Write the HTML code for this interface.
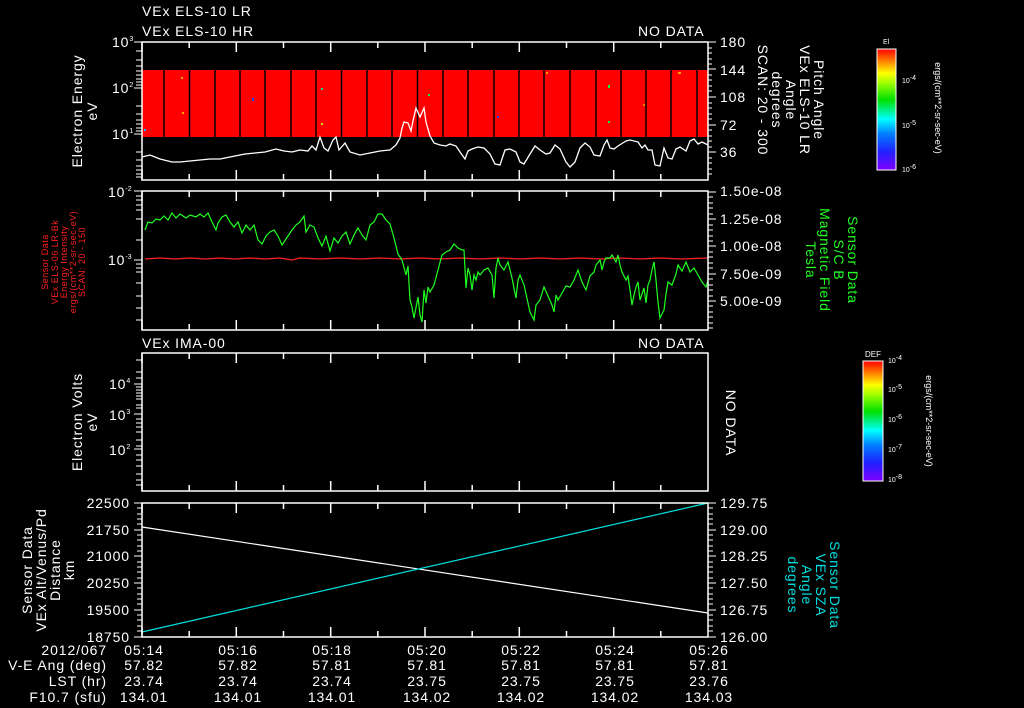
<!DOCTYPE html>
<html><head><meta charset="utf-8"><style>
html,body{margin:0;padding:0;background:#000;width:1024px;height:708px;overflow:hidden}
svg{display:block}
text{font-family:"Liberation Sans",sans-serif;fill:#fff;font-size:14px;letter-spacing:0.9px}
.s{font-size:12px}
.xs{font-size:7px;letter-spacing:0}
</style></head><body>
<svg width="1024" height="708" viewBox="0 0 1024 708">
<defs>
<linearGradient id="cb" x1="0" y1="1" x2="0" y2="0">
<stop offset="0" stop-color="#8000ff"/><stop offset="0.15" stop-color="#2020ff"/><stop offset="0.3" stop-color="#0080ff"/><stop offset="0.42" stop-color="#00ffff"/><stop offset="0.58" stop-color="#00e000"/><stop offset="0.72" stop-color="#a0ff00"/><stop offset="0.8" stop-color="#ffff00"/><stop offset="0.9" stop-color="#ff8000"/><stop offset="1" stop-color="#ff0000"/>
</linearGradient>
<g id="xt" stroke="#fff" stroke-width="1.5">
<path d="M142 0v10M236.3 0v10M330.7 0v10M425 0v10M519.3 0v10M613.7 0v10M189.2 0v6M283.5 0v6M377.8 0v6M472.2 0v6M566.5 0v6M660.8 0v6"/>
</g>
</defs>

<!-- Panel 1 -->
<text x="142" y="16">VEx ELS-10 LR</text>
<text x="142" y="36">VEx ELS-10 HR</text>
<text x="638" y="36">NO DATA</text>
<rect x="142" y="70" width="566" height="67" fill="#ff0000"/>
<g stroke="#000" stroke-width="1.5">
<path d="M164 70v67M189.5 70v67M215 70v67M240 70v67M265 70v67M291 70v67M316 70v67M341.5 70v67M367 70v67M392 70v67M417.5 70v67M443 70v67M468 70v67M494 70v67M519 70v67M544 70v67M570 70v67M596 70v67M621 70v67M646 70v67M671 70v67M697 70v67"/>
</g>
<g>
<rect x="181" y="77" width="2" height="2" fill="#ffa000"/><rect x="252" y="98" width="2" height="3" fill="#2040ff"/><rect x="182" y="112" width="2" height="2" fill="#ffa000"/><rect x="321" y="88" width="2" height="2" fill="#00e0a0"/><rect x="321" y="123" width="2" height="2" fill="#e0e000"/><rect x="428" y="94" width="2" height="2" fill="#00ff40"/><rect x="497" y="116" width="2" height="2" fill="#2040ff"/><rect x="608" y="85" width="2" height="3" fill="#00ff40"/><rect x="608" y="121" width="2" height="2" fill="#00ff40"/><rect x="643" y="104" width="2" height="2" fill="#ff8000"/><rect x="678" y="72" width="3" height="2" fill="#ffa000"/><rect x="546" y="72" width="2" height="2" fill="#ffa000"/><rect x="144" y="129" width="2" height="2" fill="#00c0ff"/>
</g>
<polyline fill="none" stroke="#fff" stroke-width="1.3" points="142,157 150,155 160,159 172,162 180,162 190,161 200,160 210,159 220,159 235,156 245,154 255,153 265,152 276,149 284,151 292,152 300,150 308,151 312,146 316,150 320,137 324,148 328,151 333,140 336,137 339,150 345,143 350,152 360,155 370,153 380,151 390,150 396,145 400,138 402,128 404,122 408,123 411,131 413,121 416,108 420,117 424,108 426,122 430,136 434,143 440,145 446,146 450,144 456,146 460,152 465,159 468,151 472,149 478,147 484,148 490,154 495,164 500,165 505,150 510,149 516,152 520,162 524,164 530,154 535,146 540,150 546,154 550,153 555,145 560,149 566,162 570,167 575,162 580,148 585,143 590,147 594,155 600,156 604,145 607,140 610,148 614,149 618,146 626,141 630,140 638,142 642,148 645,145 648,150 652,150 655,165 660,166 664,148 668,158 672,159 676,149 680,147 686,151 690,141 694,139 698,144 702,142 708,145"/>
<rect x="142" y="42" width="566" height="138" fill="none" stroke="#fff" stroke-width="1.5"/>
<use href="#xt" transform="translate(0,42)"/>
<use href="#xt" transform="translate(0,180) scale(1,-1)"/>
<g stroke="#fff" stroke-width="1"><path d="M134 42h8M134 88h8M134 134h8M136 51h6M136 60h6M136 66h6M136 71h6M136 75h6M136 79h6M136 82h6M136 85h6M136 106h6M136 114h6M136 120h6M136 124h6M136 128h6M136 131h6M136 152h6M136 160h6M136 166h6M136 170h6M136 174h6M136 177h6"/></g>
<g stroke="#fff" stroke-width="1"><path d="M708 42h8M708 69h8M708 97h8M708 125h8M708 152h8M708 48h4M708 53h4M708 59h4M708 64h4M708 75h4M708 80h4M708 86h4M708 91h4M708 103h4M708 108h4M708 114h4M708 119h4M708 130h4M708 136h4M708 141h4M708 147h4M708 158h4M708 163h4M708 169h4M708 174h4"/></g>
<text x="112" y="47">10<tspan dy="-6" class="xs">3</tspan></text>
<text x="112" y="93">10<tspan dy="-6" class="xs">2</tspan></text>
<text x="112" y="139">10<tspan dy="-6" class="xs">1</tspan></text>
<text x="720" y="47">180</text><text x="720" y="75">144</text><text x="720" y="102">108</text><text x="720" y="130">72</text><text x="720" y="157">36</text>
<text transform="translate(82,111) rotate(-90)" text-anchor="middle">Electron Energy</text>
<text transform="translate(97,111) rotate(-90)" text-anchor="middle">eV</text>
<text transform="translate(814,100) rotate(90)" text-anchor="middle">Pitch Angle</text>
<text transform="translate(800,100) rotate(90)" text-anchor="middle">VEx ELS-10 LR</text>
<text transform="translate(786,100) rotate(90)" text-anchor="middle">Angle</text>
<text transform="translate(772,100) rotate(90)" text-anchor="middle">degrees</text>
<text transform="translate(758,100) rotate(90)" text-anchor="middle">SCAN: 20 - 300</text>
<rect x="877" y="49" width="19" height="121" fill="url(#cb)" stroke="#fff" stroke-width="1"/>
<text x="883" y="44" class="xs">El</text>
<text x="902" y="83" class="xs">10<tspan dy="-3">-4</tspan></text>
<text x="902" y="128" class="xs">10<tspan dy="-3">-5</tspan></text>
<text x="902" y="172" class="xs">10<tspan dy="-3">-6</tspan></text>
<text transform="translate(935,108) rotate(90)" text-anchor="middle" class="xs" style="font-size:9px">ergs/(cm**2-sr-sec-eV)</text>

<!-- Panel 2 -->
<polyline fill="none" stroke="#ff2020" stroke-width="1.2" points="145,259 160,258 175,259 190,258 205,259 220,258 235,259 250,258 265,259 280,258 292,260 300,258 320,259 340,258 360,259 380,258 400,259 420,258 440,259 460,258 480,259 500,258 520,259 540,258 560,259 580,258 600,259 620,258 640,259 660,258 680,259 708,258"/>
<polyline fill="none" stroke="#20ff20" stroke-width="1.2" points="145,230 148,222 152,223 156,219 160,220 164,216 168,220 172,213 176,218 180,214 186,218 190,215 196,217 200,214 204,217 208,213 212,222 216,230 218,223 222,217 226,215 230,222 234,227 238,222 242,233 246,225 250,230 254,225 258,240 262,244 266,236 270,232 274,230 278,236 282,245 288,236 292,230 296,225 300,222 304,216 306,232 310,225 314,227 318,238 322,246 326,236 330,251 334,238 338,243 342,236 346,232 350,244 354,235 358,228 362,235 366,240 370,225 374,222 378,214 382,214 386,220 390,224 394,238 398,254 402,260 406,275 408,266 410,300 412,307 414,318 418,297 420,315 422,322 424,290 426,303 428,287 430,292 434,285 438,270 442,255 446,252 450,250 454,244 458,248 462,250 464,250 466,288 468,268 470,275 472,290 474,275 476,280 478,272 480,275 484,270 488,268 492,275 494,298 496,268 498,258 500,265 504,270 508,262 512,278 516,298 518,280 520,275 524,285 530,312 534,320 536,305 540,300 544,287 548,296 552,305 554,312 556,295 558,300 562,293 566,286 570,287 574,280 578,270 582,282 586,290 590,276 594,272 596,265 600,260 602,270 604,262 606,258 610,258 612,255 616,262 618,255 620,265 622,272 626,280 628,276 630,290 632,305 634,295 636,287 638,282 640,300 642,294 644,288 646,303 648,285 650,280 652,270 654,262 656,280 658,302 660,318 664,310 666,294 668,282 672,285 676,274 678,265 682,271 686,262 690,272 694,268 698,275 702,282 706,287 708,280"/>
<rect x="142" y="191" width="566" height="139" fill="none" stroke="#fff" stroke-width="1.5"/>
<use href="#xt" transform="translate(0,191)"/>
<use href="#xt" transform="translate(0,330) scale(1,-1)"/>
<g stroke="#fff" stroke-width="1"><path d="M134 191h8M134 260h8M136 196h6M136 200h6M136 205h6M136 210h6M136 219h6M136 240h6M136 283h6M136 296h6M136 308h6M136 320h6M136 264h6M136 268h6M136 272h6"/></g>
<g stroke="#fff" stroke-width="1"><path d="M708 192h8M708 219h8M708 246h8M708 274h8M708 301h8"/><path d="M708 197h5M708 203h5M708 208h5M708 214h5M708 225h5M708 230h5M708 236h5M708 241h5M708 252h5M708 257h5M708 263h5M708 268h5M708 279h5M708 285h5M708 290h5M708 296h5M708 306h5M708 312h5M708 317h5M708 323h5M708 328h5"/></g>
<text x="108" y="197">10<tspan dy="-6" class="xs">-2</tspan></text>
<text x="108" y="265">10<tspan dy="-6" class="xs">-3</tspan></text>
<text x="720" y="196">1.50e-08</text><text x="720" y="224">1.25e-08</text><text x="720" y="251">1.00e-08</text><text x="720" y="279">7.50e-09</text><text x="720" y="306">5.00e-09</text>
<g>
<text transform="translate(48,262) rotate(-90)" text-anchor="middle" style="fill:#ff2020;font-size:9px;letter-spacing:0.5px">Sensor Data</text>
<text transform="translate(58,262) rotate(-90)" text-anchor="middle" style="fill:#ff2020;font-size:9px;letter-spacing:0.5px">VEx ELS-06 LR-Bk</text>
<text transform="translate(67,262) rotate(-90)" text-anchor="middle" style="fill:#ff2020;font-size:9px;letter-spacing:0.5px">Energy Intensity</text>
<text transform="translate(76,262) rotate(-90)" text-anchor="middle" style="fill:#ff2020;font-size:9px;letter-spacing:0.5px">ergs/(cm**2-sr-sec-eV)</text>
<text transform="translate(85,262) rotate(-90)" text-anchor="middle" style="fill:#ff2020;font-size:9px;letter-spacing:0.5px">SCAN: 20 - 150</text>
</g>
<g>
<text transform="translate(848,260) rotate(90)" text-anchor="middle" style="fill:#20ff20">Sensor Data</text>
<text transform="translate(834,260) rotate(90)" text-anchor="middle" style="fill:#20ff20">S/C B</text>
<text transform="translate(820,260) rotate(90)" text-anchor="middle" style="fill:#20ff20">Magnetic Field</text>
<text transform="translate(806,260) rotate(90)" text-anchor="middle" style="fill:#20ff20">Tesla</text>
</g>

<!-- Panel 3 -->
<text x="142" y="348">VEx IMA-00</text>
<text x="638" y="348">NO DATA</text>
<rect x="142" y="353" width="566" height="138" fill="none" stroke="#fff" stroke-width="1.5"/>
<use href="#xt" transform="translate(0,353)"/>
<use href="#xt" transform="translate(0,491) scale(1,-1)"/>
<g stroke="#fff" stroke-width="1"><path d="M134 384h8M134 414h8M134 449h8M136 360h6M136 372h6M136 378h6M136 387h6M136 390h6M136 393h6M136 396h6M136 399h6M136 405h6M136 408h6M136 419h6M136 423h6M136 427h6M136 432h6M136 440h6M136 446h6M136 455h6M136 460h6M136 466h6M136 474h6M136 480h6M136 485h6"/></g>
<text x="109" y="389">10<tspan dy="-6" class="xs">4</tspan></text>
<text x="109" y="420">10<tspan dy="-6" class="xs">3</tspan></text>
<text x="109" y="455">10<tspan dy="-6" class="xs">2</tspan></text>
<text transform="translate(82,422) rotate(-90)" text-anchor="middle">Electron Volts</text>
<text transform="translate(97,422) rotate(-90)" text-anchor="middle">eV</text>
<text transform="translate(726,423) rotate(90)" text-anchor="middle">NO DATA</text>
<rect x="863" y="361" width="20" height="120" fill="url(#cb)" stroke="#fff" stroke-width="1"/>
<text x="865" y="357" class="xs" style="font-size:8px">DEF</text>
<text x="888" y="363" class="xs">10<tspan dy="-3">-4</tspan></text>
<text x="888" y="392" class="xs">10<tspan dy="-3">-5</tspan></text>
<text x="888" y="422" class="xs">10<tspan dy="-3">-6</tspan></text>
<text x="888" y="452" class="xs">10<tspan dy="-3">-7</tspan></text>
<text x="888" y="482" class="xs">10<tspan dy="-3">-8</tspan></text>
<text transform="translate(926,421) rotate(90)" text-anchor="middle" class="xs" style="font-size:9px">ergs/(cm**2-sr-sec-eV)</text>

<!-- Panel 4 -->
<line x1="142" y1="527" x2="708" y2="613" stroke="#fff" stroke-width="1.2"/>
<line x1="142" y1="632" x2="708" y2="503" stroke="#00e0e0" stroke-width="1.2"/>
<rect x="142" y="503" width="566" height="134" fill="none" stroke="#fff" stroke-width="1.5"/>
<use href="#xt" transform="translate(0,503)"/>
<use href="#xt" transform="translate(0,637) scale(1,-1)"/>
<g stroke="#fff" stroke-width="1"><path d="M134 503h8M134 530h8M134 556h8M134 583h8M134 610h8M134 637h8"/><path d="M137 508h5M137 514h5M137 519h5M137 524h5M137 535h5M137 540h5M137 546h5M137 551h5M137 562h5M137 567h5M137 572h5M137 578h5M137 588h5M137 594h5M137 599h5M137 604h5M137 615h5M137 620h5M137 626h5M137 631h5"/></g>
<g stroke="#fff" stroke-width="1"><path d="M708 503h8M708 530h8M708 556h8M708 583h8M708 610h8M708 637h8"/><path d="M708 508h5M708 514h5M708 519h5M708 524h5M708 535h5M708 540h5M708 546h5M708 551h5M708 562h5M708 567h5M708 572h5M708 578h5M708 588h5M708 594h5M708 599h5M708 604h5M708 615h5M708 620h5M708 626h5M708 631h5"/></g>
<g text-anchor="end"><text x="130" y="508">22500</text><text x="130" y="535">21750</text><text x="130" y="561">21000</text><text x="130" y="588">20250</text><text x="130" y="615">19500</text><text x="130" y="642">18750</text></g>
<text x="720" y="508">129.75</text><text x="720" y="535">129.00</text><text x="720" y="561">128.25</text><text x="720" y="588">127.50</text><text x="720" y="615">126.75</text><text x="720" y="642">126.00</text>
<text transform="translate(32,570) rotate(-90)" text-anchor="middle">Sensor Data</text>
<text transform="translate(46,570) rotate(-90)" text-anchor="middle">VEx Alt/Venus/Pd</text>
<text transform="translate(60,570) rotate(-90)" text-anchor="middle">Distance</text>
<text transform="translate(74,570) rotate(-90)" text-anchor="middle">km</text>
<text transform="translate(830,585) rotate(90)" text-anchor="middle" style="fill:#00e0e0">Sensor Data</text>
<text transform="translate(816,585) rotate(90)" text-anchor="middle" style="fill:#00e0e0">VEx SZA</text>
<text transform="translate(802,585) rotate(90)" text-anchor="middle" style="fill:#00e0e0">Angle</text>
<text transform="translate(788,585) rotate(90)" text-anchor="middle" style="fill:#00e0e0">degrees</text>

<!-- Bottom labels -->
<g text-anchor="end"><text x="107" y="655">2012/067</text><text x="107" y="670">V-E Ang (deg)</text><text x="107" y="686">LST (hr)</text><text x="107" y="702">F10.7 (sfu)</text></g>
<g text-anchor="middle">
<text x="144" y="655">05:14</text><text x="144" y="670">57.82</text><text x="144" y="686">23.74</text><text x="144" y="702">134.01</text>
<text x="238" y="655">05:16</text><text x="238" y="670">57.82</text><text x="238" y="686">23.74</text><text x="238" y="702">134.01</text>
<text x="332" y="655">05:18</text><text x="332" y="670">57.81</text><text x="332" y="686">23.74</text><text x="332" y="702">134.01</text>
<text x="427" y="655">05:20</text><text x="427" y="670">57.81</text><text x="427" y="686">23.75</text><text x="427" y="702">134.02</text>
<text x="521" y="655">05:22</text><text x="521" y="670">57.81</text><text x="521" y="686">23.75</text><text x="521" y="702">134.02</text>
<text x="615" y="655">05:24</text><text x="615" y="670">57.81</text><text x="615" y="686">23.75</text><text x="615" y="702">134.02</text>
<text x="709" y="655">05:26</text><text x="709" y="670">57.81</text><text x="709" y="686">23.76</text><text x="709" y="702">134.03</text>
</g>
</svg>
</body></html>
